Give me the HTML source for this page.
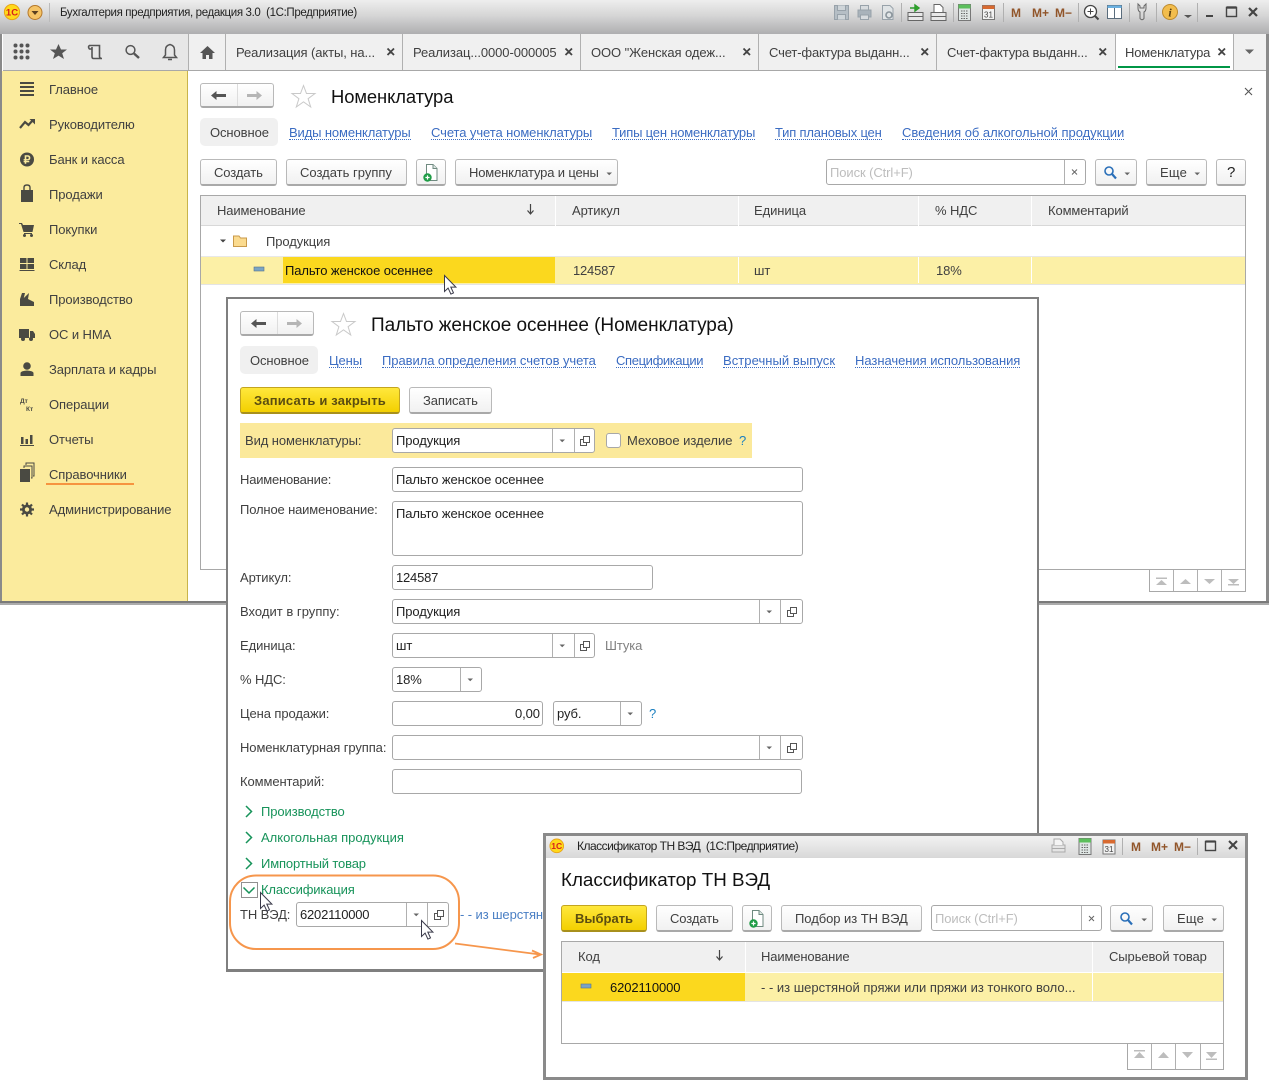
<!DOCTYPE html>
<html><head><meta charset="utf-8"><style>
html,body{margin:0;padding:0;background:#fff}
#p{position:relative;width:1269px;height:1080px;overflow:hidden;background:#fff;font-family:"Liberation Sans",sans-serif;font-size:13px;color:#404040;letter-spacing:-.09px}
#p div{position:absolute;box-sizing:border-box}
#p svg text{letter-spacing:0}
.t{white-space:nowrap;line-height:16px;height:16px;margin-top:1px}
.l{color:#3b6cc2;border-bottom:1px dotted #3b6cc2;height:15px!important;line-height:15px!important;margin-top:0}
.b{background:linear-gradient(#fff,#f1f1f1);border:1px solid #b9b9b9;border-bottom:2px solid #a9a9a9;border-radius:3px}
.y{background:linear-gradient(#ffe83c,#f3d000);border:1px solid #c3a520;border-bottom:2px solid #a8901c;border-radius:3px}
.i{background:#fff;border:1px solid #a8a8a8;border-radius:3px}
.v{width:1px;background:#b0b0b0}
.s{background:#e2e2e2}
.g{color:#17935a}
</style></head><body><div id="p">

<!-- main window -->
<div style="left:0;top:0;width:1269px;height:605px;background:#fff;border:solid #8a8a8a;border-width:0 3px 0 2px"></div>
<div style="left:0;top:601px;width:1269px;height:2px;background:#7a7a7a"></div>
<div style="left:0;top:603px;width:1269px;height:2px;background:#ababab"></div>
<div style="left:0;top:0;width:1269px;height:34px;background:linear-gradient(#eeeeee,#d6d6d6 45%,#aeaeb0)"></div>
<div class="t" style="left:60px;top:4px;font-size:11.5px;color:#222;letter-spacing:-.36px">Бухгалтерия предприятия, редакция 3.0&nbsp; (1С:Предприятие)</div>
<div style="left:3px;top:34px;width:1263px;height:37px;background:#f0f0f0;border-bottom:1px solid #a8a8a8"></div>
<div style="left:3px;top:34px;width:185px;height:36px;background:#e7e7e7"></div>
<div class="v" style="left:188px;top:34px;height:36px"></div>
<div class="v" style="left:225px;top:34px;height:36px"></div>
<div class="v" style="left:402px;top:34px;height:36px"></div>
<div class="v" style="left:580px;top:34px;height:36px"></div>
<div class="v" style="left:758px;top:34px;height:36px"></div>
<div class="v" style="left:936px;top:34px;height:36px"></div>
<div style="left:1115px;top:34px;width:119px;height:36px;background:#fff;border-left:1px solid #b0b0b0;border-right:1px solid #b0b0b0"></div>
<div style="left:1118px;top:66px;width:112px;height:2px;background:#009646"></div>
<div class="t" style="left:236px;top:44px">Реализация (акты, на...</div>
<div class="t" style="left:413px;top:44px">Реализац...0000-000005</div>
<div class="t" style="left:591px;top:44px">ООО "Женская одеж...</div>
<div class="t" style="left:769px;top:44px;letter-spacing:-.14px">Счет-фактура выданн...</div>
<div class="t" style="left:947px;top:44px;letter-spacing:-.14px">Счет-фактура выданн...</div>
<div class="t" style="left:1125px;top:44px;letter-spacing:-.17px">Номенклатура</div>

<!-- sidebar -->
<div style="left:2px;top:71px;width:186px;height:530px;background:#fbeb9d;border-right:1px solid #c9b44a"></div>
<div class="t" style="left:49px;top:81px">Главное</div>
<div class="t" style="left:49px;top:116px">Руководителю</div>
<div class="t" style="left:49px;top:151px">Банк и касса</div>
<div class="t" style="left:49px;top:186px">Продажи</div>
<div class="t" style="left:49px;top:221px">Покупки</div>
<div class="t" style="left:49px;top:256px">Склад</div>
<div class="t" style="left:49px;top:291px">Производство</div>
<div class="t" style="left:49px;top:326px">ОС и НМА</div>
<div class="t" style="left:49px;top:361px">Зарплата и кадры</div>
<div class="t" style="left:49px;top:396px">Операции</div>
<div class="t" style="left:49px;top:431px">Отчеты</div>
<div class="t" style="left:49px;top:466px">Справочники</div>
<div style="left:46px;top:483px;width:88px;height:2px;background:#f6943f"></div>
<div class="t" style="left:49px;top:501px">Администрирование</div>

<!-- main form -->
<div class="b" style="left:200px;top:83px;width:74px;height:25px"></div>
<div class="v" style="left:237px;top:84px;height:22px;background:#ddd"></div>
<div class="t" style="left:331px;top:85px;font-size:18.4px;height:21px;line-height:21px;color:#111">Номенклатура</div>
<div style="left:200px;top:118px;width:78px;height:28px;background:#f0f0f0;border-radius:5px"></div>
<div class="t" style="left:210px;top:124px">Основное</div>
<div class="t l" style="left:289px;top:125px;letter-spacing:-.12px">Виды номенклатуры</div>
<div class="t l" style="left:431px;top:125px">Счета учета номенклатуры</div>
<div class="t l" style="left:612px;top:125px;letter-spacing:-.19px">Типы цен номенклатуры</div>
<div class="t l" style="left:775px;top:125px;letter-spacing:-.19px">Тип плановых цен</div>
<div class="t l" style="left:902px;top:125px;letter-spacing:-.03px">Сведения об алкогольной продукции</div>

<div class="b" style="left:200px;top:159px;width:77px;height:27px"></div><div class="t" style="left:214px;top:164px">Создать</div>
<div class="b" style="left:286px;top:159px;width:121px;height:27px"></div><div class="t" style="left:300px;top:164px;letter-spacing:0">Создать группу</div>
<div class="b" style="left:416px;top:159px;width:30px;height:27px"></div>
<div class="b" style="left:455px;top:159px;width:163px;height:27px"></div><div class="t" style="left:469px;top:164px;letter-spacing:-.16px">Номенклатура и цены</div>
<div class="i" style="left:826px;top:159px;width:260px;height:26px"></div><div class="v" style="left:1064px;top:160px;height:24px"></div>
<div class="t" style="left:830px;top:164px;color:#bdbdbd">Поиск (Ctrl+F)</div>
<div class="b" style="left:1095px;top:159px;width:42px;height:27px"></div>
<div class="b" style="left:1146px;top:159px;width:61px;height:27px"></div><div class="t" style="left:1160px;top:164px;letter-spacing:.2px">Еще</div>
<div class="b" style="left:1216px;top:159px;width:30px;height:27px"></div><div class="t" style="left:1227px;top:164px;font-size:15px;color:#222">?</div>

<!-- main table -->
<div style="left:200px;top:195px;width:1046px;height:375px;border:1px solid #a8a8a8;background:#fff"></div>
<div style="left:201px;top:196px;width:1044px;height:30px;background:#f0f0f0;border-bottom:1px solid #d8d8d8"></div>
<div class="v" style="left:555px;top:196px;height:30px;background:#fff"></div>
<div class="v" style="left:738px;top:196px;height:30px;background:#fff"></div>
<div class="v" style="left:918px;top:196px;height:30px;background:#fff"></div>
<div class="v" style="left:1031px;top:196px;height:30px;background:#fff"></div>
<div class="t" style="left:217px;top:202px;letter-spacing:-.14px">Наименование</div>
<div class="t" style="left:572px;top:202px">Артикул</div>
<div class="t" style="left:754px;top:202px">Единица</div>
<div class="t" style="left:935px;top:202px">% НДС</div>
<div class="t" style="left:1048px;top:202px;letter-spacing:-.12px">Комментарий</div>
<div class="t" style="left:266px;top:233px">Продукция</div>
<div style="left:201px;top:256px;width:1044px;height:29px;background:#fcf0a6;border-top:1px solid #e8e8e8;border-bottom:1px solid #e4e4e4"></div>
<div style="left:283px;top:257px;width:272px;height:26px;background:#fbd81e"></div>
<div class="v" style="left:738px;top:257px;height:26px;background:#fff"></div>
<div class="v" style="left:918px;top:257px;height:26px;background:#fff"></div>
<div class="v" style="left:1031px;top:257px;height:26px;background:#fff"></div>
<div class="t" style="left:285px;top:262px;color:#111">Пальто женское осеннее</div>
<div class="t" style="left:573px;top:262px;letter-spacing:-.2px">124587</div>
<div class="t" style="left:754px;top:262px">шт</div>
<div class="t" style="left:936px;top:262px">18%</div>
<div style="left:1149px;top:569px;width:97px;height:23px;border:1px solid #a8a8a8;background:#fff"></div>
<div class="v" style="left:1173px;top:570px;height:21px"></div>
<div class="v" style="left:1197px;top:570px;height:21px"></div>
<div class="v" style="left:1221px;top:570px;height:21px"></div>

<!-- window 2 -->
<div style="left:226px;top:297px;width:813px;height:675px;background:#fff;border:solid #7f7f7f;border-width:2px 2px 3px 2px"></div>
<div class="b" style="left:240px;top:311px;width:74px;height:25px"></div>
<div class="v" style="left:277px;top:312px;height:22px;background:#ddd"></div>
<div class="t" style="left:371px;top:314px;font-size:19px;height:21px;line-height:21px;color:#111;letter-spacing:-.05px">Пальто женское осеннее (Номенклатура)</div>
<div style="left:240px;top:346px;width:78px;height:28px;background:#f0f0f0;border-radius:5px"></div>
<div class="t" style="left:250px;top:352px">Основное</div>
<div class="t l" style="left:329px;top:353px">Цены</div>
<div class="t l" style="left:382px;top:353px;letter-spacing:-.06px">Правила определения счетов учета</div>
<div class="t l" style="left:616px;top:353px;letter-spacing:-.36px">Спецификации</div>
<div class="t l" style="left:723px;top:353px;letter-spacing:.06px">Встречный выпуск</div>
<div class="t l" style="left:855px;top:353px;letter-spacing:-.04px">Назначения использования</div>
<div class="y" style="left:240px;top:387px;width:160px;height:27px"></div><div class="t" style="left:254px;top:392px;font-weight:bold;color:#5b4d10;letter-spacing:.17px">Записать и закрыть</div>
<div class="b" style="left:409px;top:387px;width:83px;height:27px"></div><div class="t" style="left:423px;top:392px">Записать</div>
<div style="left:240px;top:423px;width:512px;height:35px;background:#fbe99b"></div>
<div class="t" style="left:245px;top:432px">Вид номенклатуры:</div>
<div class="i" style="left:392px;top:428px;width:203px;height:25px"></div><div class="v" style="left:552px;top:429px;height:23px"></div><div class="v" style="left:574px;top:429px;height:23px"></div>
<div class="t" style="left:396px;top:432px;color:#222">Продукция</div>
<div class="i" style="left:606px;top:433px;width:15px;height:15px"></div>
<div class="t" style="left:627px;top:432px;letter-spacing:-.02px">Меховое изделие</div>
<div class="t" style="left:739px;top:432px;color:#1a7fc0">?</div>
<div class="t" style="left:240px;top:471px;letter-spacing:-.2px">Наименование:</div>
<div class="i" style="left:392px;top:467px;width:411px;height:25px"></div><div class="t" style="left:396px;top:471px;color:#222">Пальто женское осеннее</div>
<div class="t" style="left:240px;top:501px;letter-spacing:-.15px">Полное наименование:</div>
<div class="i" style="left:392px;top:501px;width:411px;height:55px"></div><div class="t" style="left:396px;top:505px;color:#222">Пальто женское осеннее</div>
<div class="t" style="left:240px;top:569px">Артикул:</div>
<div class="i" style="left:392px;top:565px;width:261px;height:25px"></div><div class="t" style="left:396px;top:569px;color:#222;letter-spacing:-.2px">124587</div>
<div class="t" style="left:240px;top:603px;letter-spacing:.02px">Входит в группу:</div>
<div class="i" style="left:392px;top:599px;width:411px;height:25px"></div><div class="v" style="left:759px;top:600px;height:23px"></div><div class="v" style="left:780px;top:600px;height:23px"></div><div class="t" style="left:396px;top:603px;color:#222">Продукция</div>
<div class="t" style="left:240px;top:637px">Единица:</div>
<div class="i" style="left:392px;top:633px;width:203px;height:25px"></div><div class="v" style="left:552px;top:634px;height:23px"></div><div class="v" style="left:574px;top:634px;height:23px"></div><div class="t" style="left:396px;top:637px;color:#222">шт</div>
<div class="t" style="left:605px;top:637px;color:#808080">Штука</div>
<div class="t" style="left:240px;top:671px">% НДС:</div>
<div class="i" style="left:392px;top:667px;width:90px;height:25px"></div><div class="v" style="left:460px;top:668px;height:23px"></div><div class="t" style="left:396px;top:671px;color:#222">18%</div>
<div class="t" style="left:240px;top:705px">Цена продажи:</div>
<div class="i" style="left:392px;top:701px;width:151px;height:25px"></div><div class="t" style="left:515px;top:705px;color:#222">0,00</div>
<div class="i" style="left:553px;top:701px;width:89px;height:25px"></div><div class="v" style="left:620px;top:702px;height:23px"></div><div class="t" style="left:557px;top:705px;color:#222">руб.</div>
<div class="t" style="left:649px;top:705px;color:#1a7fc0">?</div>
<div class="t" style="left:240px;top:739px">Номенклатурная группа:</div>
<div class="i" style="left:392px;top:735px;width:411px;height:25px"></div><div class="v" style="left:759px;top:736px;height:23px"></div><div class="v" style="left:780px;top:736px;height:23px"></div>
<div class="t" style="left:240px;top:773px">Комментарий:</div>
<div class="i" style="left:392px;top:769px;width:410px;height:25px"></div>
<div class="t g" style="left:261px;top:803px">Производство</div>
<div class="t g" style="left:261px;top:829px;letter-spacing:0">Алкогольная продукция</div>
<div class="t g" style="left:261px;top:855px;letter-spacing:-.15px">Импортный товар</div>
<div class="t g" style="left:261px;top:881px;letter-spacing:-.15px">Классификация</div>
<div class="t" style="left:240px;top:906px">ТН ВЭД:</div>
<div class="i" style="left:296px;top:902px;width:153px;height:25px"></div><div class="v" style="left:406px;top:903px;height:23px"></div><div class="v" style="left:427px;top:903px;height:23px"></div>
<div class="t" style="left:300px;top:906px;color:#222;letter-spacing:-.2px">6202110000</div>
<div class="t" style="left:460px;top:906px;color:#4a7fc4">- - из шерстяной пряжи</div>

<!-- window 3 -->
<div style="left:543px;top:833px;width:705px;height:247px;background:#fff;border:3px solid #8a8a8a"></div>
<div style="left:546px;top:836px;width:699px;height:22px;background:linear-gradient(#f2f2f2,#d8d8d8)"></div>
<div class="t" style="left:577px;top:837px;font-size:12px;color:#222;letter-spacing:-.52px">Классификатор ТН ВЭД&nbsp; (1С:Предприятие)</div>
<div class="t" style="left:561px;top:868px;font-size:18.8px;height:21px;line-height:21px;color:#111;letter-spacing:0">Классификатор ТН ВЭД</div>
<div class="y" style="left:561px;top:905px;width:86px;height:27px"></div><div class="t" style="left:575px;top:910px;font-weight:bold;color:#5b4d10;letter-spacing:0">Выбрать</div>
<div class="b" style="left:656px;top:905px;width:77px;height:27px"></div><div class="t" style="left:670px;top:910px">Создать</div>
<div class="b" style="left:742px;top:905px;width:30px;height:27px"></div>
<div class="b" style="left:781px;top:905px;width:141px;height:27px"></div><div class="t" style="left:795px;top:910px;letter-spacing:-.05px">Подбор из ТН ВЭД</div>
<div class="i" style="left:931px;top:905px;width:171px;height:26px"></div><div class="v" style="left:1081px;top:906px;height:24px"></div>
<div class="t" style="left:935px;top:910px;color:#bdbdbd">Поиск (Ctrl+F)</div>
<div class="b" style="left:1110px;top:905px;width:43px;height:27px"></div>
<div class="b" style="left:1163px;top:905px;width:61px;height:27px"></div><div class="t" style="left:1177px;top:910px;letter-spacing:.2px">Еще</div>
<div style="left:561px;top:941px;width:663px;height:103px;border:1px solid #a8a8a8;background:#fff"></div>
<div style="left:562px;top:942px;width:661px;height:30px;background:#f0f0f0"></div>
<div class="v" style="left:745px;top:942px;height:30px;background:#fff"></div>
<div class="v" style="left:1092px;top:942px;height:30px;background:#fff"></div>
<div class="t" style="left:578px;top:948px">Код</div>
<div class="t" style="left:761px;top:948px;letter-spacing:-.14px">Наименование</div>
<div class="t" style="left:1109px;top:948px">Сырьевой товар</div>
<div style="left:562px;top:973px;width:661px;height:29px;background:#fcf0a6;border-bottom:1px solid #e4e4e4"></div>
<div style="left:562px;top:973px;width:183px;height:28px;background:#fbd81e"></div>
<div class="v" style="left:1092px;top:973px;height:28px;background:#fff"></div>
<div class="t" style="left:610px;top:979px;color:#111;letter-spacing:-.1px">6202110000</div>
<div class="t" style="left:761px;top:979px;letter-spacing:0">- - из шерстяной пряжи или пряжи из тонкого воло...</div>
<div style="left:1127px;top:1043px;width:97px;height:27px;border:1px solid #a8a8a8;background:#fff"></div>
<div class="v" style="left:1151px;top:1044px;height:25px"></div>
<div class="v" style="left:1175px;top:1044px;height:25px"></div>
<div class="v" style="left:1200px;top:1044px;height:25px"></div>

<!-- icon layer -->
<svg width="1269" height="1080" viewBox="0 0 1269 1080" style="position:absolute;left:0;top:0">
<defs>
<g id="cur"><path d="M0 0V16L3.6 12.6 6.4 18.6 9 17.4 6.3 11.6H11.4Z" fill="#fff" stroke="#3a3a4a" stroke-width="1"/></g>
<g id="dup" fill="none" stroke="#555" stroke-width="1"><rect x="3.5" y=".5" width="6" height="6" fill="#fff"/><path d="M3 3.5H.5V9.5H6.5V7"/></g>
<path id="dn" d="M.5 .5H6L3.2 3.3Z" fill="#666"/>
<g id="star"><path d="M12 1 15 9H23.5L16.6 14.2 19.2 22.5 12 17.4 4.8 22.5 7.4 14.2.5 9H9Z" fill="#fff" stroke="#c9c9c9"/></g>
<g id="addf"><path d="M3.5 .5H10L14 4.5V16.5H3.5Z" fill="#fff" stroke="#6f8a80"/><path d="M10 .5V4.5H14" fill="#dfe8e4" stroke="#6f8a80"/><circle cx="4.5" cy="13.5" r="4.2" fill="#1f9c46"/><path d="M2.4 13.5H6.6M4.5 11.4V15.6" stroke="#fff" stroke-width="1.2"/></g>
<g id="bk"><path d="M0 5.5 5.5 1V4H15V7H5.5V10Z" fill="#555"/></g>
<g id="fw"><path d="M15 5.5 9.5 1V4H0V7H9.5V10Z" fill="#b5b5b5"/></g>
<g id="logo"><circle cx="8" cy="8" r="7.6" fill="#ffd91a" stroke="#e8a317"/><text x="8" y="11.5" font-size="9.5" font-weight="bold" fill="#d6201c" text-anchor="middle" font-family="Liberation Sans">1С</text></g>
<g id="srch"><circle cx="5" cy="5" r="4" fill="none" stroke="#2a6fb8" stroke-width="1.6"/><path d="M8 8 12 12.5" stroke="#2a6fb8" stroke-width="2.2"/></g>
<g id="cal"><rect x="0" y="0" width="12" height="16" fill="#dfe6e4" stroke="#777"/><rect x="0" y="0" width="12" height="4" fill="#5cbf5c"/><path d="M2.5 6.5H9.5M2.5 9H9.5M2.5 11.5H9.5M2.5 14H9.5" stroke="#666" stroke-dasharray="1.5 1"/></g>
<g id="date"><rect x="0" y="2" width="12" height="14" fill="#f2f2f2" stroke="#777"/><rect x="0" y="2" width="12" height="3.5" fill="#d86a30"/><text x="6" y="14" font-size="8" text-anchor="middle" fill="#444" font-family="Liberation Sans">31</text></g>
</defs>

<!-- title bar icons -->
<use href="#logo" x="4" y="4"/>
<circle cx="35" cy="12.5" r="7" fill="#f5c466" stroke="#b5782a"/><path d="M31.5 11H38.5L35 15Z" fill="#5a4020"/>
<path d="M49.5 3V22" stroke="#bbb"/>
<g fill="#a9b3bb" stroke="#98a2aa"><path d="M834.5 5.5H848.5V19.5H834.5Z" fill="#b5bec5"/><path d="M837.5 5.5V10.5H845.5V5.5M837.5 19.5V14.5H845.5V19.5" fill="#cfd5d9"/>
<path d="M858 10H871V17H858Z"/><path d="M860.5 5.5H868.5V10H860.5ZM860.5 15H868.5V19.5H860.5Z" fill="#d8dcdf"/>
<path d="M882.5 5.5H890L893 8.5V19.5H882.5Z" fill="#e0e4e6"/></g><circle cx="889" cy="15" r="3" fill="none" stroke="#8b959c" stroke-width="1.6"/>
<g stroke="#b0b0b0"><path d="M901.5 3V22M953.5 3V22M1003.5 3V22M1078.5 3V22M1129.5 3V22M1156.5 3V22M1197.5 3V22"/></g>
<rect x="908" y="12.5" width="15" height="4" fill="#e8e8e8" stroke="#666"/><rect x="908" y="16.5" width="15" height="4" fill="#e8e8e8" stroke="#666"/><path d="M910 8H917M915 5V11L919 8Z" stroke="#2b9a2b" fill="#39c423" stroke-width="1.4"/>
<rect x="931" y="12.5" width="15" height="4" fill="#e8e8e8" stroke="#666"/><rect x="931" y="16.5" width="15" height="4" fill="#e8e8e8" stroke="#666"/><path d="M934 12V4.5H940L943 7.5V12" fill="#fff" stroke="#666"/>
<use href="#cal" x="958.5" y="4.5"/><use href="#date" x="982.5" y="3.5"/>
<g font-family="Liberation Sans" font-weight="bold" font-size="12" fill="#91552a"><text x="1011" y="17">M</text><text x="1032" y="17">M+</text><text x="1055" y="17">M−</text></g>
<circle cx="1090.5" cy="11.5" r="6" fill="#fff" stroke="#444" stroke-width="1.3"/><path d="M1087.5 11.5H1093.5M1090.5 8.5V14.5" stroke="#444"/><path d="M1095 16 1098.5 19.5" stroke="#444" stroke-width="2"/>
<rect x="1107.5" y="5.5" width="14" height="13" fill="#fff" stroke="#5a6c7c"/><rect x="1107.5" y="5.5" width="14" height="2.5" fill="#6ab0e0"/><path d="M1114.5 8V18" stroke="#5a6c7c"/>
<path d="M1138 4V8Q1138 11 1140 12V18.5Q1142 21 1144 18.5V12Q1146 11 1146 8V4L1144 6V8H1140V6Z" fill="none" stroke="#666" stroke-width="1"/>
<circle cx="1170" cy="12" r="7.5" fill="#f2bd4d" stroke="#bd8a2e"/><text x="1170" y="16.5" font-family="Liberation Serif" font-style="italic" font-weight="bold" font-size="12" text-anchor="middle" fill="#5a4010">i</text>
<path d="M1184 15H1192L1188 18Z" fill="#555"/>
<path d="M1206 16H1213" stroke="#444" stroke-width="2"/><rect x="1226.5" y="7.5" width="10" height="9" fill="none" stroke="#444" stroke-width="1.4"/><path d="M1226.5 7.5H1236.5" stroke="#444" stroke-width="2.4"/>
<path d="M1249 8 1257 16M1257 8 1249 16" stroke="#444" stroke-width="2.2"/>

<!-- tab bar icons -->
<g fill="#555"><circle cx="15.5" cy="45.5" r="2"/><circle cx="21.5" cy="45.5" r="2"/><circle cx="27.5" cy="45.5" r="2"/><circle cx="15.5" cy="51.5" r="2"/><circle cx="21.5" cy="51.5" r="2"/><circle cx="27.5" cy="51.5" r="2"/><circle cx="15.5" cy="57.5" r="2"/><circle cx="21.5" cy="57.5" r="2"/><circle cx="27.5" cy="57.5" r="2"/></g>
<path d="M58.5 44 61 49.5H67L62.2 53.2 64 59 58.5 55.6 53 59 54.8 53.2 50 49.5H56Z" fill="#555"/>
<path d="M89 45.5H99.5V56.5Q99.5 58.5 102 58.5H93.5Q92 58.5 92 56.5V47M89 45.5Q88 47.5 89.5 49H92" fill="none" stroke="#555" stroke-width="1.6"/>
<circle cx="130.5" cy="50" r="4.4" fill="none" stroke="#555" stroke-width="1.5"/><path d="M134 53.5 139 58" stroke="#555" stroke-width="2.4"/>
<path d="M170 44.5Q174.5 45.5 174.5 50V55L176.5 57.5H163.5L165.5 55V50Q165.5 45.5 170 44.5Z" fill="none" stroke="#555" stroke-width="1.5"/><path d="M168 59.5H172" stroke="#555" stroke-width="1.5"/>
<path d="M207.5 46 215 53H212.5V59H209V55H206V59H202.5V53H200Z" fill="#555"/>
<g stroke="#444" stroke-width="1.8"><path d="M387.5 48.5 394 55M394 48.5 387.5 55M565.5 48.5 572 55M572 48.5 565.5 55M743.5 48.5 750 55M750 48.5 743.5 55M921.5 48.5 928 55M928 48.5 921.5 55M1099.5 48.5 1106 55M1106 48.5 1099.5 55M1218.5 48.5 1225 55M1225 48.5 1218.5 55"/></g>
<path d="M1245 49.5H1254L1249.5 54Z" fill="#666"/>
<path d="M1245 88 1252 95M1252 88 1245 95" stroke="#555" stroke-width="1.1"/>

<!-- sidebar icons -->
<g fill="#4a4a42">
<path d="M20 83H34V85H20ZM20 87H34V89H20ZM20 91H34V93H20ZM20 95H34V97H20Z" transform="translate(0 -1)"/>
<path d="M20 128 25 122 28.5 125 33 120" fill="none" stroke="#4a4a42" stroke-width="2.2"/><path d="M29.5 119H35V124.5Z"/>
<circle cx="27" cy="159.5" r="7"/>
<path d="M21 190H33V202H21Z"/><path d="M24 190V187.5Q24 185 27 185 30 185 30 187.5V190" fill="none" stroke="#4a4a42" stroke-width="1.4"/>
<path d="M19 223H22L23 225H34L32.5 232H23.5L21 224H19ZM24 233H32V234H24Z"/><circle cx="24.5" cy="235.5" r="1.5"/><circle cx="31.5" cy="235.5" r="1.5"/>
<path d="M20 258H26.5V263H20ZM27.5 258H34V263H27.5ZM20 264H26.5V269H20ZM27.5 264H34V269H27.5ZM19.5 270H34.5V271H19.5Z"/>
<path d="M20 306V299L22 293H25L23.8 298 29 293 28 299 34 302V306Z"/>
<path d="M19 329H29V338H19ZM30 331H33L35 334V338H30Z"/><circle cx="23" cy="339" r="2"/><circle cx="31" cy="339" r="2"/>
<circle cx="27" cy="366" r="3.8"/><path d="M20.5 376V373Q20.5 371 27 370.5 33.5 371 33.5 373V376Z"/>
<text x="20" y="403" font-size="6.5" font-weight="bold" font-family="Liberation Sans">Дт</text><text x="26" y="411" font-size="6.5" font-weight="bold" font-family="Liberation Sans">Кт</text>
<path d="M21 437H23.5V444H21ZM25.5 439H28V444H25.5ZM30 435H32.5V444H30ZM20 445H34V446H20Z"/>
<path d="M20 469H30V482H20Z"/><path d="M24 468V466H32V478H31M26 465V463H34V476H33" fill="none" stroke="#4a4a42"/>
<circle cx="27" cy="509.5" r="5"/><path d="M27 502.5V516.5M20 509.5H34M22 504.5 32 514.5M32 504.5 22 514.5" stroke="#4a4a42" stroke-width="2.2"/>
</g>
<circle cx="27" cy="509.5" r="2.2" fill="#fbeb9d"/>
<text x="27" y="163.5" font-family="Liberation Sans" font-weight="bold" font-size="11" fill="#fbeb9d" text-anchor="middle">₽</text>

<!-- main form icons -->
<use href="#bk" x="211" y="90"/><use href="#fw" x="247" y="90"/>
<use href="#star" x="291.5" y="84.5"/>
<use href="#addf" x="423" y="164"/>
<use href="#dn" x="606" y="172"/>
<use href="#srch" x="1104" y="166"/><use href="#dn" x="1124" y="172"/><use href="#dn" x="1194" y="172"/>
<path d="M1072 169.5 1077 174.5M1077 169.5 1072 174.5" stroke="#666"/>
<path d="M530.5 204V213M527.5 210.5 530.5 214 533.5 210.5" fill="none" stroke="#444" stroke-width="1.2"/>
<path d="M220 239.5H226L223 242.5Z" fill="#444"/>
<path d="M233.5 238.5V236H239L240.5 238H246.5V246.5H233.5Z" fill="#fbdb8f" stroke="#c99a4a"/>
<rect x="254" y="267" width="10" height="4" fill="#7aa4c4" stroke="#55748c" stroke-width=".6"/>
<use href="#cur" x="444.5" y="275.5"/>
<g fill="#bdbdbd"><path d="M1180 584H1191L1185.5 579Z"/><path d="M1204 579H1215L1209.5 584Z"/><path d="M1228 579H1239L1233.5 584Z"/></g>
<path d="M1156 585H1167L1161.5 580ZM1156 577.5H1167V579H1156ZM1228 584H1239V585.5H1228Z" fill="#bdbdbd"/>

<!-- window 2 icons -->
<use href="#bk" x="251" y="318"/><use href="#fw" x="287" y="318"/>
<use href="#star" x="331.5" y="312.5"/>
<use href="#dn" x="559" y="439"/><use href="#dup" x="580" y="436"/>
<use href="#dn" x="766" y="610"/><use href="#dup" x="787" y="607"/>
<use href="#dn" x="559" y="644"/><use href="#dup" x="580" y="641"/>
<use href="#dn" x="467" y="678"/><use href="#dn" x="627" y="712"/>
<use href="#dn" x="766" y="746"/><use href="#dup" x="787" y="743"/>
<g fill="none" stroke="#17935a" stroke-width="1.5"><path d="M246 806 251.5 811.5 246 817M246 832 251.5 837.5 246 843M246 858 251.5 863.5 246 869M243.5 887.5 249 893 254.5 887.5"/></g>
<rect x="241.5" y="882.5" width="16" height="15" fill="none" stroke="#222" stroke-dasharray="1 1"/>
<use href="#dn" x="413" y="913"/><use href="#dup" x="434" y="910"/>
<use href="#cur" x="260.5" y="892.5"/><use href="#cur" x="421.5" y="920.5"/>
<rect x="230" y="875.5" width="229" height="73.5" rx="26" fill="none" stroke="#f6964c" stroke-width="2"/>
<path d="M455 943.5 540 954.5M532 950.5 541 954.5 533 958" fill="none" stroke="#f6964c" stroke-width="1.8"/>

<!-- window 3 icons -->
<use href="#logo" x="549.5" y="838.5" transform="translate(55 84) scale(.9)"/>
<rect x="1052" y="845" width="13" height="3.5" fill="#e4e4e4" stroke="#aaa"/><rect x="1052" y="848.5" width="13" height="3.5" fill="#e4e4e4" stroke="#aaa"/><path d="M1054 845V839H1060L1063 842V845" fill="#f4f4f4" stroke="#aaa"/>
<use href="#cal" x="1079" y="838.5"/><use href="#date" x="1103" y="838"/>
<g stroke="#b0b0b0"><path d="M1122.5 838V855M1197.5 838V855"/></g>
<g font-family="Liberation Sans" font-weight="bold" font-size="12" fill="#91552a"><text x="1131" y="851">M</text><text x="1151" y="851">M+</text><text x="1174" y="851">M−</text></g>
<rect x="1205.5" y="841.5" width="10" height="9" fill="none" stroke="#444" stroke-width="1.4"/><path d="M1205.5 841.5H1215.5" stroke="#444" stroke-width="2.2"/>
<path d="M1229 841 1237 849M1237 841 1229 849" stroke="#444" stroke-width="2"/>
<use href="#addf" x="749" y="910"/>
<path d="M1089 916 1094 921M1094 916 1089 921" stroke="#666"/>
<use href="#srch" x="1120" y="912"/><use href="#dn" x="1141" y="918"/><use href="#dn" x="1211" y="918"/>
<path d="M719.5 950V959M716.5 956.5 719.5 960 722.5 956.5" fill="none" stroke="#444" stroke-width="1.2"/>
<rect x="581" y="984" width="10" height="4" fill="#7aa4c4" stroke="#55748c" stroke-width=".6"/>
<g fill="#bdbdbd"><path d="M1134 1058H1145L1139.5 1052ZM1134 1050H1145V1051.5H1134Z"/><path d="M1158 1058H1169L1163.5 1052Z"/><path d="M1182 1052H1193L1187.5 1058Z"/><path d="M1206 1052H1217L1211.5 1058ZM1206 1058.5H1217V1060H1206Z"/></g>
</svg>
</div></body></html>
